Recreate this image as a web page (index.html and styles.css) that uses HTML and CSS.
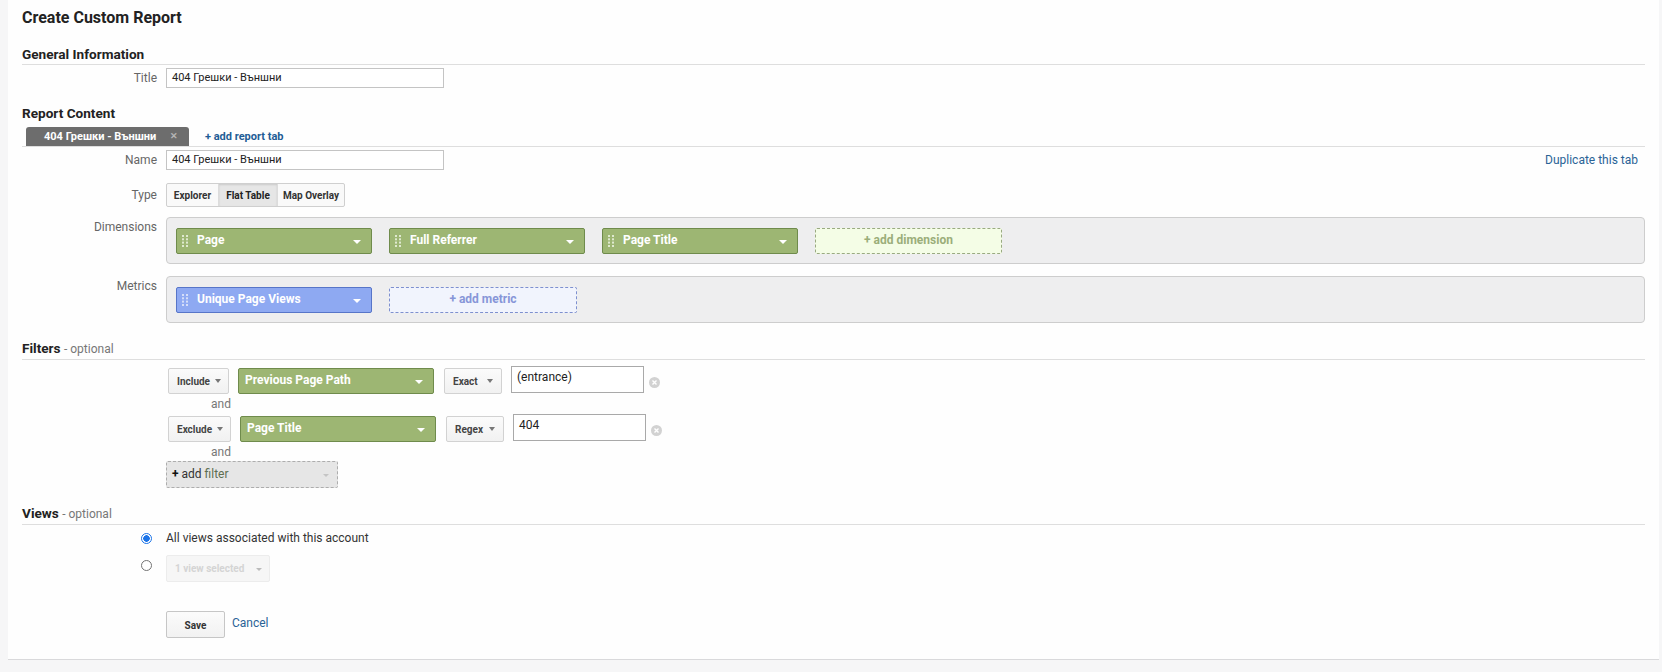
FILE: index.html
```html
<!DOCTYPE html>
<html>
<head>
<meta charset="utf-8">
<title>Create Custom Report</title>
<link rel="stylesheet" href="styles.css">
</head>
<body>
<div class="card">
  <h1 class="page-title">Create Custom Report</h1>

  <h2 class="section section-line">General Information</h2>
  <div class="frow row-title">
    <div class="flabel">Title</div>
    <div class="fctl"><div class="text-input">404 Грешки - Външни</div></div>
  </div>

  <h2 class="section section-rc">Report Content</h2>
  <div class="tabbar">
    <div class="tab"><span>404 Грешки - Външни</span><span class="tab-x">✕</span></div>
    <a class="add-tab">+ add report tab</a>
  </div>

  <div class="frow row-name">
    <div class="flabel">Name</div>
    <div class="fctl fctl-split">
      <div class="text-input">404 Грешки - Външни</div>
      <a class="dup-link">Duplicate this tab</a>
    </div>
  </div>

  <div class="frow row-type">
    <div class="flabel label-type">Type</div>
    <div class="fctl">
      <div class="seg">
        <span class="seg-btn w-explorer">Explorer</span>
        <span class="seg-btn w-flat selected">Flat Table</span>
        <span class="seg-btn w-map">Map Overlay</span>
      </div>
    </div>
  </div>

  <div class="frow row-dims">
    <div class="flabel">Dimensions</div>
    <div class="fctl">
      <div class="well">
        <div class="chip green"><span class="handle"><svg width="6" height="12" viewBox="0 0 6 12"><g fill="#dfe9cf"><rect x="0" y="0" width="2" height="2"/><rect x="4" y="0" width="2" height="2"/><rect x="0" y="3.3" width="2" height="2"/><rect x="4" y="3.3" width="2" height="2"/><rect x="0" y="6.6" width="2" height="2"/><rect x="4" y="6.6" width="2" height="2"/><rect x="0" y="10" width="2" height="2"/><rect x="4" y="10" width="2" height="2"/></g></svg></span><span class="chip-text">Page</span><span class="caret-w"></span></div>
        <div class="chip green"><span class="handle"><svg width="6" height="12" viewBox="0 0 6 12"><g fill="#dfe9cf"><rect x="0" y="0" width="2" height="2"/><rect x="4" y="0" width="2" height="2"/><rect x="0" y="3.3" width="2" height="2"/><rect x="4" y="3.3" width="2" height="2"/><rect x="0" y="6.6" width="2" height="2"/><rect x="4" y="6.6" width="2" height="2"/><rect x="0" y="10" width="2" height="2"/><rect x="4" y="10" width="2" height="2"/></g></svg></span><span class="chip-text">Full Referrer</span><span class="caret-w"></span></div>
        <div class="chip green"><span class="handle"><svg width="6" height="12" viewBox="0 0 6 12"><g fill="#dfe9cf"><rect x="0" y="0" width="2" height="2"/><rect x="4" y="0" width="2" height="2"/><rect x="0" y="3.3" width="2" height="2"/><rect x="4" y="3.3" width="2" height="2"/><rect x="0" y="6.6" width="2" height="2"/><rect x="4" y="6.6" width="2" height="2"/><rect x="0" y="10" width="2" height="2"/><rect x="4" y="10" width="2" height="2"/></g></svg></span><span class="chip-text">Page Title</span><span class="caret-w"></span></div>
        <div class="add-slot add-dim">+ add dimension</div>
      </div>
    </div>
  </div>

  <div class="frow row-metrics">
    <div class="flabel">Metrics</div>
    <div class="fctl">
      <div class="well">
        <div class="chip blue"><span class="handle"><svg width="6" height="12" viewBox="0 0 6 12"><g fill="#d5def9"><rect x="0" y="0" width="2" height="2"/><rect x="4" y="0" width="2" height="2"/><rect x="0" y="3.3" width="2" height="2"/><rect x="4" y="3.3" width="2" height="2"/><rect x="0" y="6.6" width="2" height="2"/><rect x="4" y="6.6" width="2" height="2"/><rect x="0" y="10" width="2" height="2"/><rect x="4" y="10" width="2" height="2"/></g></svg></span><span class="chip-text">Unique Page Views</span><span class="caret-w"></span></div>
        <div class="add-slot add-met">+ add metric</div>
      </div>
    </div>
  </div>

  <h2 class="section section-line section-filters">Filters <span class="optional">- optional</span></h2>
  <div class="filters">
    <div class="filter-row first">
      <span class="sel sel-inc">Include<span class="caret-g"></span></span>
      <div class="chip green fchip"><span class="chip-text">Previous Page Path</span><span class="caret-w"></span></div>
      <span class="sel sel-match">Exact<span class="caret-g"></span></span>
      <div class="text-input filter-input">(entrance)</div>
      <span class="remove"><svg width="11" height="11" viewBox="0 0 11 11"><circle cx="5.5" cy="5.5" r="5.5" fill="#d2d2d2"/><path d="M3.5 3.5 L7.5 7.5 M7.5 3.5 L3.5 7.5" stroke="#fff" stroke-width="1.4"/></svg></span>
    </div>
    <div class="and">and</div>
    <div class="filter-row">
      <span class="sel sel-exc">Exclude<span class="caret-g"></span></span>
      <div class="chip green fchip"><span class="chip-text">Page Title</span><span class="caret-w"></span></div>
      <span class="sel sel-match">Regex<span class="caret-g"></span></span>
      <div class="text-input filter-input">404</div>
      <span class="remove"><svg width="11" height="11" viewBox="0 0 11 11"><circle cx="5.5" cy="5.5" r="5.5" fill="#d2d2d2"/><path d="M3.5 3.5 L7.5 7.5 M7.5 3.5 L3.5 7.5" stroke="#fff" stroke-width="1.4"/></svg></span>
    </div>
    <div class="and">and</div>
    <div class="add-filter"><span><b>+</b> add <span class="af-green">filter</span></span><span class="caret-l"></span></div>
  </div>

  <h2 class="section section-line section-views">Views <span class="optional">- optional</span></h2>
  <div class="frow row-radio1">
    <div class="flabel radio-cell"><span class="radio checked"></span></div>
    <div class="fctl radio-text">All views associated with this account</div>
  </div>
  <div class="frow row-radio2">
    <div class="flabel radio-cell"><span class="radio"></span></div>
    <div class="fctl"><span class="sel sel-disabled">1 view selected<span class="caret-d"></span></span></div>
  </div>

  <div class="frow row-actions">
    <div class="flabel"></div>
    <div class="fctl actions">
      <span class="btn-save">Save</span>
      <a class="cancel">Cancel</a>
    </div>
  </div>
</div>
</body>
</html>
```

FILE: styles.css
```css
html, body {
  margin: 0;
  padding: 0;
}
body {
  background: #f6f6f7;
  font-family: "Roboto", "Liberation Sans", Arial, sans-serif;
  color: #222;
  height: 672px;
  overflow: hidden;
}
.card {
  margin-left: 8px;
  width: 1623px;
  padding: 0 14px 21px 14px;
  background: #fefefe;
  border-bottom: 1px solid #d9d9db;
}
.page-title {
  margin: 0;
  padding-top: 6px;
  font-size: 16px;
  line-height: 24px;
  font-weight: 700;
  color: #222;
}
.section {
  margin: 0;
  font-size: 13.6px;
  line-height: 20px;
  font-weight: 700;
  color: #222;
}
.section-line {
  border-bottom: 1px solid #dedede;
  margin-top: 14px;
}
.section-rc { margin-top: 15px; }
.section-filters { margin-top: 15px; }
.section-views { margin-top: 15px; }
.optional {
  font-size: 12px;
  font-weight: 400;
  color: #777;
}

.frow {
  display: grid;
  grid-template-columns: 135px 1fr;
  column-gap: 9px;
}
.flabel {
  text-align: right;
  font-size: 12px;
  line-height: 20px;
  color: #666;
}
.label-type { padding-top: 2px; }
.fctl { min-width: 0; }
.fctl-split {
  display: flex;
  justify-content: space-between;
  align-items: flex-start;
}

.row-title { margin-top: 3px; }
.row-name { margin-top: 3px; }
.row-type { margin-top: 13px; }
.row-dims { margin-top: 10px; }
.row-metrics { margin-top: 12px; }

.text-input {
  box-sizing: border-box;
  width: 278px;
  height: 20px;
  border: 1px solid #c4c4c4;
  background: #fff;
  font-size: 11px;
  line-height: 18px;
  padding-left: 5px;
  color: #222;
}

.tabbar {
  margin-top: 4px;
  display: flex;
  align-items: flex-end;
  border-bottom: 1px solid #dedede;
}
.tab {
  margin-left: 4px;
  box-sizing: border-box;
  width: 163px;
  height: 19px;
  background: #6d6d6d;
  border-radius: 3px 3px 0 0;
  color: #fff;
  font-size: 11px;
  font-weight: 700;
  line-height: 19px;
  padding: 0 11px 0 18px;
  display: flex;
  align-items: center;
  justify-content: space-between;
}
.tab-x {
  color: #b5b5b5;
  font-size: 9px;
  font-weight: 700;
}
.add-tab {
  margin-left: 16px;
  color: #1f5d96;
  font-size: 11px;
  font-weight: 700;
  line-height: 19px;
}
.dup-link {
  color: #2a6396;
  font-size: 12px;
  line-height: 16px;
  margin-right: 7px;
  margin-top: 2px;
}

.seg {
  display: inline-flex;
  border: 1px solid #cfcfcf;
  border-radius: 2px;
  background: #f9f9f9;
  height: 22px;
}
.seg-btn {
  box-sizing: border-box;
  display: flex;
  align-items: center;
  justify-content: center;
  font-size: 10px;
  font-weight: 700;
  color: #333;
  height: 22px;
}
.seg-btn + .seg-btn { border-left: 1px solid #dcdcdc; }
.w-explorer { width: 51px; }
.w-flat { width: 59px; }
.w-map { width: 67px; }
.seg-btn.selected {
  background: #e6e6e6;
  box-shadow: inset 0 1px 2px rgba(0,0,0,0.12);
  color: #222;
}

.well {
  box-sizing: border-box;
  height: 47px;
  background: #eeeeef;
  border: 1px solid #cdcdcd;
  border-radius: 4px;
  padding: 10px 9px 0 9px;
  display: flex;
  gap: 17px;
}
.chip {
  box-sizing: border-box;
  width: 196px;
  height: 26px;
  border-radius: 2px;
  display: flex;
  align-items: center;
  color: #fff;
  font-size: 12px;
  font-weight: 700;
  padding: 0 10px 3px 5px;
}
.chip.green {
  background: #9db673;
  border: 1px solid #6f8b4c;
}
.chip.blue {
  background: #8ea9f2;
  border: 1px solid #5775c8;
}
.handle {
  display: flex;
  width: 6px;
  height: 12px;
  margin-top: 3px;
}
.chip-text {
  flex: 1;
  margin-left: 9px;
  white-space: nowrap;
}
.caret-w {
  width: 0;
  height: 0;
  border-left: 4px solid transparent;
  border-right: 4px solid transparent;
  border-top: 4px solid #fff;
  margin-top: 5px;
}
.add-slot {
  box-sizing: border-box;
  width: 187px;
  height: 26px;
  border-radius: 2px;
  display: flex;
  align-items: center;
  justify-content: center;
  font-size: 12px;
  font-weight: 700;
  padding-bottom: 2px;
}
.add-dim {
  background: #f4fde6;
  border: 1px dashed #9aaa82;
  color: #9bae7a;
}
.add-met {
  width: 188px;
  background: #f1f4fd;
  border: 1px dashed #7e90cf;
  color: #8796d8;
}

.filters {
  padding-left: 146px;
}
.filter-row {
  display: flex;
  align-items: flex-start;
  height: 26px;
}
.filter-row.first { margin-top: 8px; }
.filter-row:not(.first) { margin-top: 5px; }
.sel {
  box-sizing: border-box;
  height: 26px;
  display: inline-flex;
  align-items: center;
  justify-content: space-between;
  padding: 0 7px 0 8px;
  background: linear-gradient(#fbfbfb, #f1f1f1);
  border: 1px solid #d2d2d2;
  border-radius: 2px;
  font-size: 10px;
  font-weight: 700;
  color: #444;
}
.sel-inc { width: 61px; }
.sel-exc { width: 63px; }
.caret-g {
  width: 0;
  height: 0;
  border-left: 3px solid transparent;
  border-right: 3px solid transparent;
  border-top: 4px solid #777;
}
.fchip {
  margin-left: 9px;
  padding-left: 6px;
}
.fchip .chip-text { margin-left: 0; }
.sel-match {
  margin-left: 10px;
  width: 58px;
  padding: 0 8px 0 8px;
}
.filter-input {
  width: 133px;
  height: 27px;
  margin-left: 9px;
  margin-top: -2px;
  font-size: 12px;
  line-height: 20px;
  padding-left: 5px;
  border-color: #a9a9a9;
}
.remove {
  display: flex;
  margin-left: 5px;
  margin-top: 9px;
}
.and {
  padding-left: 43px;
  margin-top: 3px;
  font-size: 12px;
  line-height: 14px;
  color: #777;
}
.add-filter {
  box-sizing: border-box;
  margin-top: 2px;
  margin-left: -2px;
  width: 172px;
  height: 27px;
  background: #e6e6e6;
  border: 1px dashed #adadad;
  border-radius: 2px;
  display: flex;
  align-items: center;
  justify-content: space-between;
  padding: 0 8px 2px 5px;
  font-size: 12px;
  color: #333;
}
.add-filter b { color: #111; }
.af-green { color: #5e6e51; }
.caret-l {
  width: 0;
  height: 0;
  border-left: 3px solid transparent;
  border-right: 3px solid transparent;
  border-top: 3px solid #c4c4c4;
  margin-top: 4px;
}

.row-radio1 { margin-top: 3px; }
.row-radio2 { margin-top: 7px; }
.radio-cell {
  display: flex;
  justify-content: flex-end;
  align-items: flex-start;
  padding-right: 5px;
}
.radio {
  box-sizing: border-box;
  width: 11px;
  height: 11px;
  border-radius: 50%;
  border: 1px solid #737373;
  background: #fff;
  margin-top: 5px;
}
.radio.checked {
  border: 1px solid #1a73e8;
  background: radial-gradient(circle, #1a73e8 0 3px, #fff 3.5px);
}
.radio-text {
  font-size: 12px;
  line-height: 20px;
  color: #333;
}
.sel-disabled {
  height: 27px;
  width: 104px;
  background: #f6f6f6;
  border: 1px solid #ececec;
  color: #d4d4d4;
}
.caret-d {
  width: 0;
  height: 0;
  border-left: 3px solid transparent;
  border-right: 3px solid transparent;
  border-top: 3px solid #bbb;
  margin-top: 2px;
}

.row-actions { margin-top: 29px; }
.actions {
  display: flex;
  align-items: flex-start;
}
.btn-save {
  box-sizing: border-box;
  width: 59px;
  height: 27px;
  display: flex;
  align-items: center;
  justify-content: center;
  background: linear-gradient(#fbfbfb, #f2f2f2);
  border: 1px solid #c6c6c6;
  border-radius: 2px;
  font-size: 10px;
  font-weight: 700;
  color: #333;
  padding-top: 2px;
}
.cancel {
  margin-left: 7px;
  margin-top: 4px;
  font-size: 12px;
  line-height: 16px;
  color: #2a6396;
}
```
